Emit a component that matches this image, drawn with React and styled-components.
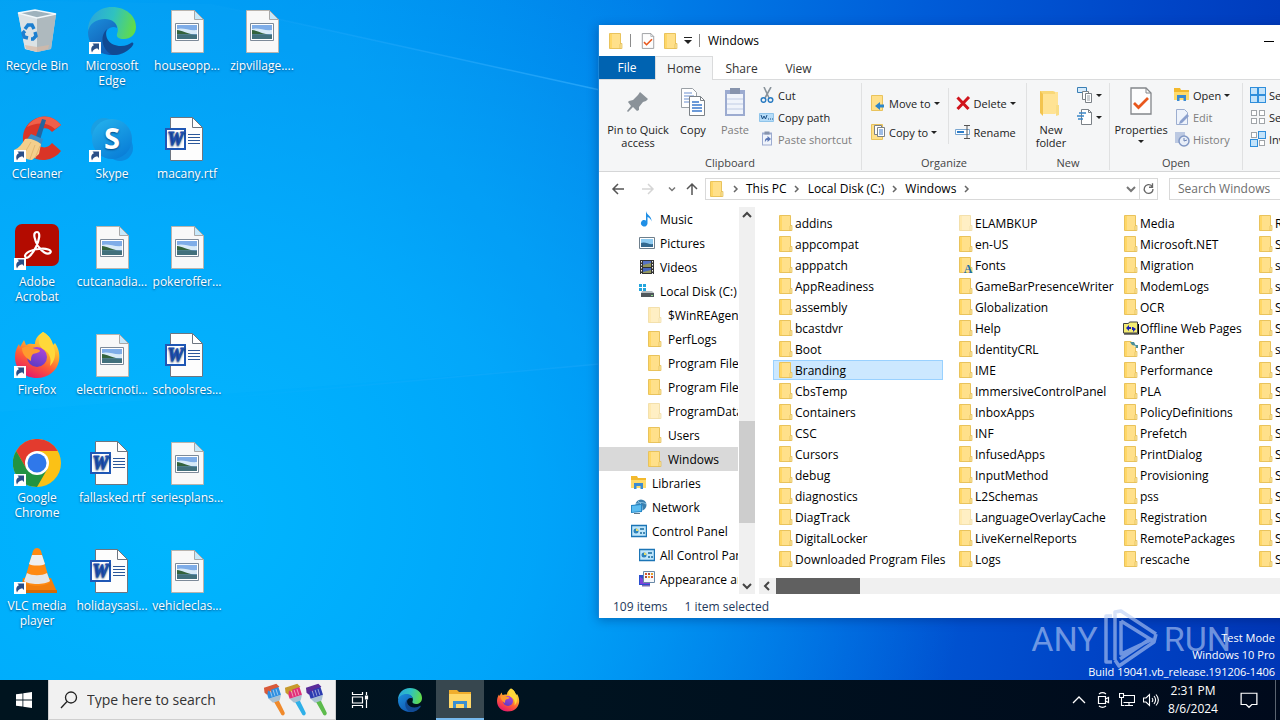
import React from "react";
import styled, { createGlobalStyle, css } from "styled-components";

const GlobalStyle = createGlobalStyle`
  *, *::before, *::after {
    box-sizing: border-box;
  }

  body {
    margin: 0;
    overflow: hidden;
    font-family: "Open Sans", "Noto Sans", sans-serif;
    font-size: 12px;
    line-height: 15px;
    color: #000;
  }

  button {
    border: 0;
    padding: 0;
    background: none;
    font: inherit;
    color: inherit;
    white-space: nowrap;
  }

  a {
    color: inherit;
    text-decoration: none;
  }

  svg {
    display: block;
    flex: none;
  }
`;

/* ---------- layout ---------- */

const Screen = styled.div`
  display: flex;
  flex-direction: column;
  height: 100vh;
  overflow: hidden;
`;

const Desktop = styled.main`
  position: relative;
  flex: 1;
  min-height: 0;
  overflow: hidden;
  background:
    radial-gradient(ellipse 62% 95% at 14% 76%, rgba(0, 184, 255, 0.95) 0%, rgba(0, 176, 255, 0.75) 45%, rgba(0, 160, 250, 0) 100%),
    linear-gradient(97deg, #009df0 0%, #0092f0 26%, #007ee8 48%, #005cd8 68%, #0044c6 86%, #0036b6 100%);
`;

const LightBeams = styled.svg`
  position: absolute;
  inset: 0;
  width: 100%;
  height: 100%;
`;

const IconGrid = styled.div`
  position: relative;
  display: grid;
  grid-auto-flow: column;
  grid-template-rows: repeat(6, 108px);
  grid-auto-columns: 75px;
  justify-content: start;
`;

const Shortcut = styled.button`
  display: flex;
  flex-direction: column;
  align-items: center;
  gap: 3px;
  padding: 7px 1px 0 0;
  color: #fff;
  text-shadow: 0 1px 2px rgba(0, 40, 90, 0.7);

  span {
    width: 70px;
    display: flex;
    justify-content: center;
    text-align: center;
    white-space: ${(props) => (props.$wrap ? "normal" : "nowrap")};
  }
`;

const SystemInfo = styled.div`
  position: absolute;
  right: 5px;
  bottom: 0;
  color: #fff;
  text-align: right;
  font-size: 11px;
  line-height: 17px;
`;

const Watermark = styled.div`
  position: absolute;
  right: 49px;
  bottom: 9px;
  display: flex;
  align-items: center;
  gap: 5px;
  color: rgba(185, 205, 245, 0.6);
  font-family: "Roboto", sans-serif;
  font-size: 34px;
  line-height: 64px;
`;

/* ---------- explorer window ---------- */

const Window = styled.section`
  position: absolute;
  top: 25px;
  bottom: 62px;
  left: 598px;
  right: -104px;
  display: flex;
  flex-direction: column;
  background: #fff;
  border-left: 1px solid #1a86d8;
  box-shadow: 0 2px 10px rgba(0, 20, 80, 0.35);
`;

const TitleBar = styled.header`
  display: flex;
  align-items: center;
  height: 31px;
  padding-left: 8px;
`;

const QuickButton = styled.button`
  display: flex;
  align-items: center;
  justify-content: center;
  width: ${(props) => props.$width || 23}px;
  height: 22px;
`;

const Bar = styled.span`
  width: 1px;
  height: 13px;
  margin: 0 5px;
  background: #8c8c8c;
`;

const WindowTitle = styled.h1`
  flex: 1;
  margin: 0;
  padding-left: 3px;
  font-size: 12px;
  font-weight: 400;
`;

const CaptionButton = styled.button`
  display: flex;
  align-items: center;
  justify-content: center;
  width: 46px;
  height: 30px;
`;

const Tabs = styled.nav`
  display: flex;
  height: 24px;
  border-bottom: 1px solid #dadbdc;
`;

const Tab = styled.button`
  height: 24px;
  width: 57px;
  color: #333;

  ${(props) =>
    props.$kind === "file" &&
    css`
      width: 56px;
      height: 23px;
      background: #0063b1;
      color: #fff;
    `}
  ${(props) =>
    props.$kind === "active" &&
    css`
      width: 58px;
      background: #f5f6f7;
      border: 1px solid #dadbdc;
      border-bottom: 0;
    `}
`;

const Ribbon = styled.div`
  display: flex;
  height: 92px;
  background: #f5f6f7;
  border-bottom: 1px solid #d5d6d7;
  padding: 3px 0 1px;
  font-size: 11px;
`;

const Group = styled.div`
  display: flex;
  flex: none;
  flex-direction: column;
  width: ${(props) => props.$width}px;
  border-right: 1px solid #e0e1e2;
`;

const GroupBody = styled.div`
  display: flex;
  flex: 1;
  padding-left: ${(props) => props.$pad || 4}px;
`;

const GroupLabel = styled.div`
  height: 15px;
  text-align: center;
  color: #444;
`;

const BigButton = styled.button`
  display: flex;
  flex-direction: column;
  align-items: center;
  gap: 4px;
  width: ${(props) => props.$width}px;
  padding-top: 4px;
  line-height: 13px;
  color: ${(props) => (props.$dim ? "#7d7d7d" : "#222")};
`;

const SmallColumn = styled.div`
  display: flex;
  flex-direction: column;
  gap: ${(props) => props.$gap || 0}px;
  padding: ${(props) => (props.$gap ? 9 : 1)}px 0 0 ${(props) => props.$pad || 4}px;
`;

const SmallButton = styled.button`
  display: flex;
  align-items: center;
  gap: 3px;
  height: 22px;
  color: ${(props) => (props.$dim ? "#7d7d7d" : "#222")};
`;

const Divider = styled.span`
  width: 1px;
  height: 56px;
  margin: 5px 0 0 8px;
  background: #e0e1e2;
`;

const AddressRow = styled.div`
  display: flex;
  align-items: center;
  height: 35px;
  padding: 0 12px 2px 6px;
`;

const NavButton = styled.button`
  display: flex;
  align-items: center;
  justify-content: center;
  width: ${(props) => props.$width}px;
  height: 22px;
`;

const AddressBox = styled.div`
  display: flex;
  align-items: center;
  flex: 1;
  height: 22px;
  padding-left: 3px;
  border: 1px solid #d9d9d9;
`;

const Crumb = styled.button`
  display: flex;
  align-items: center;
`;

const Chevron = styled.span`
  display: flex;
  justify-content: center;
  width: 21px;
`;

const Grow = styled.span`
  flex: 1;
`;

const RefreshButton = styled(NavButton)`
  border-left: 1px solid #d9d9d9;
`;

const SearchBox = styled.input`
  width: 203px;
  height: 22px;
  margin-left: 11px;
  padding: 0 8px;
  border: 1px solid #d9d9d9;
  font: inherit;

  &::placeholder {
    color: #6d6d6d;
    opacity: 1;
  }
`;

const Panes = styled.div`
  display: flex;
  flex: 1;
  min-height: 0;
`;

const Tree = styled.nav`
  width: 139px;
  overflow: hidden;
`;

const TreeItem = styled.a`
  display: flex;
  align-items: center;
  gap: 5px;
  height: 24px;
  padding-left: ${(props) => 32 + props.$level * 8}px;
  white-space: nowrap;
  background: ${(props) => (props.$selected ? "#d9d9d9" : "transparent")};
`;

const VerticalScroll = styled.div`
  display: flex;
  flex-direction: column;
  width: 16px;
  margin-left: 1px;
  background: #f0f0f0;
`;

const VerticalThumb = styled.span`
  height: 102px;
  margin: 198px 0 auto;
  background: #cdcdcd;
`;

const ArrowButton = styled.button`
  display: flex;
  align-items: center;
  justify-content: center;
  width: 16px;
  height: 16px;
`;

const Content = styled.div`
  display: flex;
  flex-direction: column;
  justify-content: space-between;
  flex: 1;
  min-width: 0;
  padding-left: 4px;
`;

const FileGrid = styled.div`
  display: grid;
  grid-auto-flow: column;
  grid-template-rows: repeat(17, 21px);
  grid-template-columns: 170px 155px 125px 170px;
  column-gap: 10px;
  padding: 6px 0 0 14px;
`;

const FileItem = styled.button`
  display: flex;
  align-items: center;
  gap: 1px;
  height: 20px;
  padding-left: 4px;
  border: 1px solid ${(props) => (props.$selected ? "#99d1ff" : "transparent")};
  background: ${(props) => (props.$selected ? "#cce8ff" : "none")};
`;

const HorizontalScroll = styled.div`
  display: flex;
  height: 16px;
  background: #f0f0f0;
`;

const HorizontalThumb = styled.span`
  width: 84px;
  margin-left: 1px;
  background: #606060;
`;

const StatusBar = styled.footer`
  display: flex;
  align-items: center;
  gap: 17px;
  height: 24px;
  padding-left: 14px;
  color: #1e395b;
`;

/* ---------- taskbar ---------- */

const Taskbar = styled.footer`
  display: flex;
  height: 40px;
  background: linear-gradient(90deg, #00141f 0%, #001320 45%, #000a1c 100%);
  color: #fff;
`;

const TaskButton = styled.button`
  display: flex;
  align-items: center;
  justify-content: center;
  width: ${(props) => props.$width || 48}px;
  background: ${(props) => (props.$active ? "#37474f" : "none")};
  border-bottom: ${(props) => (props.$active ? "2px solid #76b9ed" : "0")};
`;

const TaskSearch = styled.label`
  display: flex;
  align-items: center;
  width: 288px;
  padding: 0 6px 0 11px;
  background: #f1f1f1;
  border: 1px solid #cfcfcf;
  border-top: 0;

  input {
    flex: 1;
    min-width: 0;
    margin-left: 5px;
    border: 0;
    background: none;
    font: inherit;
    font-size: 14px;
  }

  input::placeholder {
    color: #333;
    opacity: 1;
  }
`;

const Tray = styled.div`
  display: flex;
  margin-left: auto;
`;

const Clock = styled.button`
  width: 60px;
  line-height: 18px;
  text-align: center;
  white-space: normal;
`;

const PeekButton = styled.button`
  width: 5px;
  border-left: 1px solid #5b6470;
`;

/* ---------- large icons ---------- */

function Arrow() {
  return (
    <g>
      <path d="M1 35h12v12H1z" fill="#fff" />
      <path d="M4 45.500c-1.800-4 0-7 2-7.300L4.500 36.500H11V43L9.200 41.200C7 41.500 5 43 4 45.500z" fill="#2b4f87" />
    </g>
  );
}

function Box48({ children, size = 48 }) {
  return (
    <svg width={size} height={size} viewBox="0 0 48 48">
      {children}
    </svg>
  );
}

function RecycleIcon() {
  return (
    <Box48>
      <path d="M5 6l17-3 21 4-5 35-14 3-12-3z" fill="#cbd5da" />
      <path d="M24 10l19-3-5 35-14 3z" fill="#aeb9be" />
      <path d="M5 6l19 4v35l-12-3z" fill="#dbe2e5" />
      <path d="M5 6l17-3 21 4-19 4z" fill="#9eb2bd" stroke="#f2f8fb" strokeWidth="1.500" />
      <path d="M12 38l12 2 12-2-1 4-11 3-11-3z" fill="#d9b9a4" opacity=".7" />
      <g fill="none" stroke="#1c7fd0" strokeWidth="3.400">
        <path d="M12 22l3-4h4l2 4" />
        <path d="M22 25l1 4-3 3h-2" />
        <path d="M15 31l-4-1-1-4 2-2" />
      </g>
    </Box48>
  );
}

function EdgeArt() {
  return (
    <g>
      <defs>
        <linearGradient id="edgeTop" x1="0" y1=".3" x2="1" y2=".5">
          <stop offset="0" stopColor="#2aa5dc" />
          <stop offset=".5" stopColor="#2fc2c0" />
          <stop offset="1" stopColor="#62dc48" />
        </linearGradient>
        <linearGradient id="edgeLeft" x1="0" y1="0" x2=".7" y2="1">
          <stop offset="0" stopColor="#1b8fdc" />
          <stop offset="1" stopColor="#1057b0" />
        </linearGradient>
      </defs>
      <path d="M0 24C0 10 10 0 24 0s24 9 24 20c0 8-6 12-12 12-5 0-8-2-7-5 3-7-2-13-9-13C10 14 2 18 0 24z" fill="url(#edgeTop)" />
      <path d="M0 25c1-8 8-13 17-13 7 0 12 4 12 9-5-3-12 1-12 9 0 9 8 16 16 17-3 1-6 1-9 1C10 48 0 38 0 25z" fill="url(#edgeLeft)" />
      <path d="M19 22c-3 8 2 17 14 17 5 0 8-2 10-3 2-1 3 0 2 2-4 6-11 10-20 10C14 44 11 29 19 22z" fill="#114a93" />
    </g>
  );
}

function EdgeIcon() {
  return (
    <Box48>
      <EdgeArt />
      <Arrow />
    </Box48>
  );
}

function CCleanerIcon() {
  return (
    <Box48>
      <path d="M48 10C43 3 34 0 27 2 15 5 9 15 10 26c1 12 11 20 22 19 7-1 12-4 16-9l-9-8c-3 4-8 6-12 3-5-3-5-12 0-16 4-3 9-2 12 2z" fill="#da3527" />
      <path d="M48 10C43 3 34 0 27 2c-6 2-10 5-13 10 10-5 20-5 28 2z" fill="#f0604a" />
      <path d="M29 4l4 1-6 20-5-1z" fill="#2466a0" />
      <path d="M18 19l12 5-2 7-16-4z" fill="#3a8cc8" />
      <path d="M12 24c5-1 11 1 16 5l-2 10-7 6c-6 0-12-5-18-10 5-2 8-6 11-11z" fill="#f4cf8c" />
      <path d="M18 27l-7 12M22 30l-5 14M27 31l-5 12" stroke="#e5b871" />
      <Arrow />
    </Box48>
  );
}

function SkypeIcon() {
  return (
    <Box48>
      <defs>
        <linearGradient id="skype" x1="0" y1="0" x2=".6" y2="1">
          <stop offset="0" stopColor="#25b4ee" />
          <stop offset="1" stopColor="#0a80d8" />
        </linearGradient>
      </defs>
      <circle cx="16" cy="16" r="13" fill="#1a9fe2" />
      <circle cx="32" cy="33" r="13" fill="#0b8be0" />
      <circle cx="24" cy="24" r="20" fill="url(#skype)" />
      <text x="24" y="34" textAnchor="middle" fontFamily="Open Sans, sans-serif" fontWeight="700" fontSize="29" fill="#fff">
        S
      </text>
      <Arrow />
    </Box48>
  );
}

function AcrobatIcon() {
  return (
    <Box48>
      <rect x="2" y="1" width="44" height="42" rx="7" fill="#b30b00" />
      <path
        d="M24 9c-5 0-2 9 1 14 4 6 9 9 12 7 3-3-4-5-11-4-7 0-14 4-14 7 1 5 7-1 11-9 3-6 5-15 1-15z"
        fill="none"
        stroke="#fff"
        strokeWidth="2.200"
      />
      <Arrow />
    </Box48>
  );
}

function FirefoxArt() {
  return (
    <g>
      <defs>
        <linearGradient id="foxBody" x1=".8" y1="0" x2=".3" y2="1">
          <stop offset="0" stopColor="#fff44f" />
          <stop offset=".35" stopColor="#ffb32c" />
          <stop offset=".65" stopColor="#ff5b36" />
          <stop offset="1" stopColor="#e3156e" />
        </linearGradient>
        <linearGradient id="foxGlobe" x1=".7" y1="0" x2=".3" y2="1">
          <stop offset="0" stopColor="#b045d8" />
          <stop offset="1" stopColor="#5b3bc4" />
        </linearGradient>
      </defs>
      <path d="M30 1c7 4 9 9 10 13l2-2c4 6 5 12 4 18-2 10-11 17-22 17C11 47 2 38 2 26c0-6 2-10 4-13l1 3 4-7 2 5c4-2 6-1 9-1 0-5 3-9 8-12z" fill="url(#foxBody)" />
      <circle cx="24" cy="26" r="10" fill="url(#foxGlobe)" />
      <path d="M9 17c6-3 10 0 14 1 2 0 4 1 4 2-1 2-5 2-7 3-2 2-2 4-2 7-5-3-9-7-9-13z" fill="#ff9a2e" />
      <path d="M30 1c7 4 9 9 10 13 4 8 2 16-3 21 2-8-1-14-7-17-6-4-5-12 0-17z" fill="#ffd83a" />
    </g>
  );
}

function FirefoxIcon() {
  return (
    <Box48>
      <FirefoxArt />
      <Arrow />
    </Box48>
  );
}

function ChromeIcon() {
  return (
    <Box48>
      <circle cx="24" cy="24" r="24" fill="#fbc116" />
      <path d="M3.200 12A24 24 0 0144.800 12H24L13.600 30z" fill="#e33b2e" />
      <path d="M3.200 12l10.400 18 10.400 6 10.400-6L24 48A24 24 0 013.200 12z" fill="#229342" />
      <circle cx="24" cy="24" r="12" fill="#fff" />
      <circle cx="24" cy="24" r="9.500" fill="#2f78ea" />
      <Arrow />
    </Box48>
  );
}

function VlcIcon() {
  return (
    <Box48>
      <path d="M10 31h28l6 14H8z" fill="#f27e0c" />
      <path d="M8 43h36v3H8z" fill="#d36a08" />
      <path d="M24 1c2 0 3 1 4 3l9 31c-4 5-22 5-26 0l9-31c1-2 2-3 4-3z" fill="#ff8a12" />
      <path d="M19 8h10l3 9c-3 2-13 2-16 0z" fill="#efefef" />
      <path d="M14 26c5 3 15 3 20 0l3 8c-5 4-21 4-26 0z" fill="#e6e6e6" />
      <Arrow />
    </Box48>
  );
}

function PhotoIcon() {
  return (
    <Box48>
      <path d="M8.500 3.500h23l9 9v33h-32z" fill="#f8f8f8" stroke="#b9b4ae" />
      <path d="M31.500 3.500v9h9z" fill="#c6e8fa" stroke="#a8a8a8" />
      <path d="M12.500 16.500h23v17h-23z" fill="#fff" stroke="#7d8a99" />
      <path d="M14 18h20v14H14z" fill="#7fade8" />
      <path d="M14 22c6-2 12 2 20 1v4H14z" fill="#d8eaf8" />
      <path d="M14 23c5 0 9 4 18 4.500H14z" fill="#33633c" />
      <path d="M14 27.500h20V32H14z" fill="#42707c" />
    </Box48>
  );
}

function WordIcon() {
  return (
    <Box48>
      <path d="M7.500 2.500h22l10 10v33h-32z" fill="#fdfdfd" stroke="#6d7580" />
      <path d="M29.500 2.500v10h10z" fill="#fff" stroke="#6d7580" />
      <path d="M25 19.500h12M25 22.500h12M25 25.500h12M25 28.500h12" stroke="#2b579a" />
      <rect x="3" y="14" width="19" height="20" fill="#fff" stroke="#1f57b5" strokeWidth="2" />
      <text x="12.500" y="30" textAnchor="middle" fontFamily="Liberation Serif, serif" fontStyle="italic" fontWeight="700" fontSize="18" fill="#1f4fae" stroke="#1f4fae">
        W
      </text>
    </Box48>
  );
}

/* ---------- small icons ---------- */

function Icon16({ children, size = 16 }) {
  return (
    <svg width={size} height={size} viewBox="0 0 16 16">
      {children}
    </svg>
  );
}

function FolderArt() {
  return (
    <g>
      <path d="M1.500.5h11v15h-11z" fill="#ffe08a" stroke="#e9c35c" />
      <path d="M2 1h2v14H2z" fill="#ffd766" />
      <path d="M12.500 10.500h1.500v5h-2v-4z" fill="#fbe6a0" stroke="#e3b94e" strokeWidth=".7" />
    </g>
  );
}

function Folder({ faded, mark }) {
  return (
    <Icon16>
      <g opacity={faded ? 0.5 : 1}>
        <FolderArt />
      </g>
      {mark === "font" && (
        <text x="10" y="16" textAnchor="middle" fontFamily="Liberation Serif, serif" fontWeight="700" fontSize="12" fill="#1f6fa8">
          A
        </text>
      )}
      {mark === "wrench" && (
        <g>
          <path d="M8 0h7v6h-3z" fill="#fff" />
          <path d="M7 1l4 0 2 4-4-1zM12 4h3v3h-2z" fill="#4c8f98" />
        </g>
      )}
    </Icon16>
  );
}

function NewFolderIcon() {
  return (
    <svg width="32" height="32" viewBox="0 0 32 32">
      <path d="M5 4h13l5 2v20H7l-2-2z" fill="#f8d777" />
      <path d="M5 4l3 3v22l-3-3z" fill="#f3c44f" />
      <path d="M8 7h12v-2h3v20l-3 2H8z" fill="#ffe394" />
      <path d="M21 18h3v10l-3 1z" fill="#f9dd86" />
    </svg>
  );
}

function SyncFolder() {
  return (
    <Icon16>
      <path d="M.5 3.500h5l1-1.500h8v11H.5z" fill="#f3ec72" stroke="#444" />
      <path d="M1 14h14.500V4" fill="none" stroke="#000" />
      <path d="M3 8l3-3v2h2v2H6v2M13 9l-3 3v-2H9V7h1" fill="#1b22b5" />
    </Icon16>
  );
}

function LibrariesIcon() {
  return (
    <Icon16>
      <path d="M0 1h6l1 2h8v10H0z" fill="#f3b92d" />
      <path d="M0 5h15v8H0z" fill="#ffdb6b" />
      <path d="M3 14V8h9v6H9.500v-3h-4v3z" fill="#3b8bd2" />
    </Icon16>
  );
}

function MusicIcon() {
  return (
    <Icon16>
      <path d="M7 0c.5 4 6 5 5.500 10.500-.5-2-1.500-3.500-4-4.500v6.500a3.300 3.300 0 11-1.500-3z" fill="#1f8fe6" />
    </Icon16>
  );
}

function PicturesIcon() {
  return (
    <Icon16>
      <path d="M.5 2.500h15v11H.5z" fill="#fff" stroke="#6e7f8c" />
      <path d="M2 4h12v8H2z" fill="#8ecbf1" />
      <path d="M2 8c4-2 8 2 12 1v3H2z" fill="#34698f" />
    </Icon16>
  );
}

function VideosIcon() {
  return (
    <Icon16>
      <path d="M1 1h14v14H1z" fill="#333" />
      <path d="M4 2h8v6H4z" fill="#5673c4" />
      <path d="M4 9h8v5H4z" fill="#4667bd" />
      <path d="M4 6l8-2v4H4zM4 13l8-2v3H4z" fill="#93975c" />
      <path d="M2.500 2v13M13.500 2v13" stroke="#eee" strokeDasharray="1.500 1.500" />
    </Icon16>
  );
}

function DiskIcon() {
  return (
    <Icon16>
      <path d="M0 1h3v3H0zM4 1h3v3H4zM0 5h3v3H0zM4 5h3v3H4z" fill="#22a5dd" />
      <path d="M3 8h10l2 2v4H2v-4z" fill="#b5bbbf" />
      <path d="M2 10h13v4H2z" fill="#50575c" />
      <path d="M12 12h2v1h-2z" fill="#8fe08a" />
    </Icon16>
  );
}

function NetworkIcon() {
  return (
    <Icon16>
      <circle cx="10" cy="6" r="5.500" fill="#3a7fae" />
      <path d="M7 2c3 2 5 6 4 9M5 5c4-2 7-2 10 0" stroke="#8cc6e8" fill="none" />
      <path d="M0 6l11-1v8L0 14z" fill="#2587c7" />
      <path d="M1 7l9-1v6L1 13z" fill="#5bbcf0" />
      <path d="M3 14h6v1H3z" fill="#60798b" />
    </Icon16>
  );
}

function ControlIcon() {
  return (
    <Icon16>
      <path d="M.5 2.500h15v11H.5z" fill="#bfe6fb" stroke="#1b75b6" strokeWidth="1.400" />
      <circle cx="5" cy="8" r="2.500" fill="#2e83bc" />
      <path d="M5 8V5.500A2.500 2.500 0 017.500 8z" fill="#e8df6a" />
      <path d="M9 5h4v2H9zM9 9h2v2H9zM12 9h2v2h-2z" fill="#4389b4" />
    </Icon16>
  );
}

function AppearanceIcon() {
  return (
    <Icon16>
      <path d="M0 4h11v10H0z" fill="#2a4fd0" />
      <path d="M1 6l10 6v1H1z" fill="#7e43d8" />
      <path d="M4.500.5h11v11h-11z" fill="#f5f7fa" stroke="#6a8aa8" />
      <path d="M6 2h2v2H6zM12 5h2v2h-2z" fill="#d8562c" />
      <path d="M9 2h2v2H9zM6 5h2v2H6z" fill="#b04a3a" />
      <path d="M12 2h2v2h-2zM9 5h2v2H9z" fill="#e8a02c" />
      <path d="M3 14h8v1.500H3z" fill="#7a6bb0" />
    </Icon16>
  );
}

function CheckPage({ size, viewBox }) {
  return (
    <svg width={size} height={size} viewBox={viewBox}>
      <path d="M1 1h15l5 5v21H1z" fill="#fdfdfd" stroke="#83868a" strokeWidth="1.300" />
      <path d="M16 1v5h5" fill="none" stroke="#83868a" />
      <path d="M4 16l4.500 4.500L18 11" fill="none" stroke="#e8571c" strokeWidth="2.800" />
    </svg>
  );
}

function Caret() {
  return (
    <svg width="6" height="3" viewBox="0 0 6 3">
      <path d="M0 0h6L3 3z" fill="#222" />
    </svg>
  );
}

function PinIcon() {
  return (
    <svg width="32" height="32" viewBox="0 0 32 32">
      <path d="M18 5l8 7-2 2-3 1-4 5v3l-2 1-4-4-5 5-1-1 4-5-3-4 1-1 4-1 5-5z" fill="#8a9299" />
    </svg>
  );
}

function CopyIcon() {
  return (
    <svg width="32" height="32" viewBox="0 0 32 32">
      <path d="M4.500 1.500h11l4 4v15h-15z" fill="#fff" stroke="#9aa0a6" />
      <path d="M7 6h8M7 9h10M7 12h10M7 15h10" stroke="#6b8fd0" />
      <path d="M12.500 9.500h11l4 4v15h-15z" fill="#fff" stroke="#7b8187" />
      <path d="M23.500 9.500v4h4" fill="none" stroke="#7b8187" />
      <path d="M15 15h7M15 18h10M15 21h10M15 24h10" stroke="#3c79cc" strokeWidth="1.400" />
    </svg>
  );
}

function PasteIcon({ size = 32, link }) {
  return (
    <svg width={size} height={size} viewBox="0 0 32 32">
      <path d="M6 3h20v26H6z" fill="#9cabd0" />
      <path d="M8 7h16v20H8z" fill="#f0f4fb" />
      <path d="M11 1h10v6H11z" fill="#8794ad" />
      {link ? (
        <path d="M12 23c-1-7 2-9 5-9v-4l7 6-7 6v-4c-2 0-4 1-5 5z" fill="#5a76b5" />
      ) : (
        <path d="M8 12h16M8 17h16M8 22h16" stroke="#c0cce4" />
      )}
    </svg>
  );
}

function CutIcon() {
  return (
    <Icon16>
      <path d="M5 0l5 11M12 0L6 11" stroke="#8a949c" strokeWidth="1.600" />
      <circle cx="4.500" cy="13" r="2.300" fill="none" stroke="#2b7cc2" strokeWidth="1.500" />
      <circle cx="11.500" cy="13" r="2.300" fill="none" stroke="#2b7cc2" strokeWidth="1.500" />
    </Icon16>
  );
}

function PathIcon() {
  return (
    <Icon16>
      <path d="M.5 4.500h14v8H.5z" fill="#b5dcf8" stroke="#8fc4ea" />
      <path d="M2 6l1.500 4L5 7l1.500 3L8 6M9 10h1M11 10h1M13 10h1" fill="none" stroke="#1b4f85" />
    </Icon16>
  );
}

function MoveIcon() {
  return (
    <Icon16>
      <path d="M1.500.5h11v15h-11z" fill="#ffe08a" stroke="#e9c35c" />
      <path d="M5 11l5-4v2.500h4v3h-4V15z" fill="#2e86c9" />
    </Icon16>
  );
}

function CopyToIcon() {
  return (
    <Icon16>
      <path d="M1.500.5h11v15h-11z" fill="#ffe08a" stroke="#e9c35c" />
      <path d="M4.500 1.500h7v9h-7z" fill="#fff" stroke="#7b8187" />
      <path d="M7.500 3.500h7v9h-7z" fill="#fff" stroke="#7b8187" />
      <path d="M9 6h4M9 8h4M9 10h4" stroke="#3c79cc" />
    </Icon16>
  );
}

function DeleteIcon() {
  return (
    <Icon16>
      <path d="M2.500 2.500l11 11.500M14 2L2.500 14" stroke="#d0141c" strokeWidth="3" />
    </Icon16>
  );
}

function RenameIcon() {
  return (
    <Icon16>
      <path d="M.5 5.500h14v5H.5z" fill="#fff" stroke="#7ba7d0" />
      <path d="M2 7h7v2H2z" fill="#2e7dc8" />
      <path d="M9 1.500h6M9 14.500h6M12 1.500v13" stroke="#555" />
    </Icon16>
  );
}

function NewItemIcon() {
  return (
    <Icon16>
      <path d="M.5.5h9v5h-9z" fill="#d6ebfb" stroke="#3a7fb5" />
      <path d="M5.500 4.500h6v8h-6z" fill="#fff" stroke="#7b8187" />
      <path d="M8.500 6.500h6v9h-6z" fill="#fff" stroke="#7b8187" />
      <path d="M10 9h3M10 11h3M10 13h3" stroke="#9aa0a6" />
    </Icon16>
  );
}

function EasyAccessIcon() {
  return (
    <Icon16>
      <path d="M4.500.5h7l3 3v12h-10z" fill="#fff" stroke="#7b8187" />
      <path d="M11.500.5v3h3" fill="none" stroke="#7b8187" />
      <path d="M2 4h7M0 7h7M1 10h5" stroke="#3a87c8" strokeWidth="1.400" />
    </Icon16>
  );
}

function EditIcon() {
  return (
    <Icon16>
      <path d="M2.500.5h8l3 3v12h-11z" fill="#eef3fb" stroke="#9daed0" />
      <path d="M13 5l2 2-7 7-3 1 1-3z" fill="#8ba0cd" />
    </Icon16>
  );
}

function HistoryIcon() {
  return (
    <Icon16>
      <path d="M1 1h10v11H1z" fill="#bcc9e2" />
      <circle cx="10" cy="10" r="5" fill="#e8eef8" stroke="#8097c4" strokeWidth="1.500" />
      <path d="M10 7v3l3-1" fill="none" stroke="#6b82b4" />
    </Icon16>
  );
}

function TilesIcon({ kind }) {
  const filled = { all: [0, 1, 2, 3], none: [], invert: [1, 2] }[kind];
  return (
    <Icon16>
      {[0, 1, 2, 3].map((i) => {
        const on = filled.includes(i);
        const inset = on ? 0 : 1;
        return (
          <rect
            key={i}
            x={(i % 2) * 8 + 0.5 + inset}
            y={Math.floor(i / 2) * 8 + 0.5 + inset}
            width={on ? 7 : 5}
            height={on ? 7 : 5}
            fill={on ? "#c3e3fa" : "#fff"}
            stroke={on ? "#2f8edb" : "#a0a4a8"}
          />
        );
      })}
    </Icon16>
  );
}

function Stroke({ d, color = "#444", width = 16, weight = 1.5 }) {
  return (
    <svg width={width} height={width} viewBox="0 0 16 16" fill="none" stroke={color} strokeWidth={weight}>
      <path d={d} />
    </svg>
  );
}

const RIGHT = "M6 5l3 3-3 3";
const DOWN = "M4 6l4 4 4-4";
const UP = "M4 10l4-4 4 4";

function Brushes() {
  const brushes = [
    ["#f08a2c", "#2f8fe0", "#d95a3a"],
    ["#2fb0e8", "#e02f78", "#c79a2c"],
    ["#5dbb4c", "#2b3bb0", "#5a2c9a"],
  ];
  return (
    <svg width="66" height="34" viewBox="0 0 66 34">
      {brushes.map(([handle, bristle, rim], i) => (
        <g key={handle} transform={`translate(${i * 21 + 1} 1) rotate(-18 10 12)`}>
          <path d="M8 17h5l2 14c0 3-4 3-4 0z" fill={handle} />
          <path d="M4 13h13l-3 5H7z" fill="#a9c0d2" />
          <path d="M4 4h13v9H4z" fill={bristle} />
          <path d="M3 1h13l2 4h-9v3l-3-3-2 4-2-3z" fill={rim} />
          <path d="M8 6v6M11 6v6M14 6v6" stroke="#ffffff" strokeOpacity=".5" />
        </g>
      ))}
    </svg>
  );
}

/* ---------- data ---------- */

const shortcuts = [
  ["Recycle Bin", RecycleIcon, true],
  ["CCleaner", CCleanerIcon],
  ["Adobe Acrobat", AcrobatIcon, true],
  ["Firefox", FirefoxIcon],
  ["Google Chrome", ChromeIcon, true],
  ["VLC media player", VlcIcon, true],
  ["Microsoft Edge", EdgeIcon, true],
  ["Skype", SkypeIcon],
  ["cutcanadia...", PhotoIcon],
  ["electricnoti...", PhotoIcon],
  ["fallasked.rtf", WordIcon],
  ["holidaysasi...", WordIcon],
  ["houseopp...", PhotoIcon],
  ["macany.rtf", WordIcon],
  ["pokeroffer...", PhotoIcon],
  ["schoolsres...", WordIcon],
  ["seriesplans...", PhotoIcon],
  ["vehicleclas...", PhotoIcon],
  ["zipvillage....", PhotoIcon],
];

const FadedFolder = () => <Folder faded />;

const tree = [
  ["Music", 1, MusicIcon],
  ["Pictures", 1, PicturesIcon],
  ["Videos", 1, VideosIcon],
  ["Local Disk (C:)", 1, DiskIcon],
  ["$WinREAgent", 2, FadedFolder],
  ["PerfLogs", 2, Folder],
  ["Program Files", 2, Folder],
  ["Program Files (x86)", 2, Folder],
  ["ProgramData", 2, FadedFolder],
  ["Users", 2, Folder],
  ["Windows", 2, Folder],
  ["Libraries", 0, LibrariesIcon],
  ["Network", 0, NetworkIcon],
  ["Control Panel", 0, ControlIcon],
  ["All Control Panel Items", 1, ControlIcon],
  ["Appearance and Personalization", 1, AppearanceIcon],
];

const files = [
  "addins", "appcompat", "apppatch", "AppReadiness", "assembly", "bcastdvr",
  "Boot", "Branding", "CbsTemp", "Containers", "CSC", "Cursors", "debug",
  "diagnostics", "DiagTrack", "DigitalLocker", "Downloaded Program Files",
  "ELAMBKUP", "en-US", "Fonts", "GameBarPresenceWriter", "Globalization",
  "Help", "IdentityCRL", "IME", "ImmersiveControlPanel", "InboxApps", "INF",
  "InfusedApps", "InputMethod", "L2Schemas", "LanguageOverlayCache",
  "LiveKernelReports", "Logs",
  "Media", "Microsoft.NET", "Migration", "ModemLogs", "OCR",
  "Offline Web Pages", "Panther", "Performance", "PLA", "PolicyDefinitions",
  "Prefetch", "PrintDialog", "Provisioning", "pss", "Registration",
  "RemotePackages", "rescache",
  "Resources", "SchCache", "schemas", "security", "ServiceProfiles",
  "ServiceState", "servicing", "Setup", "ShellComponents",
  "ShellExperiences", "SHELLNEW", "SKB", "SoftwareDistribution", "Speech",
  "Speech_OneCore", "System", "System32",
];

const fileIcons = {
  ELAMBKUP: <Folder faded />,
  LanguageOverlayCache: <Folder faded />,
  Fonts: <Folder mark="font" />,
  Panther: <Folder mark="wrench" />,
  "Offline Web Pages": <SyncFolder />,
};

/* ---------- sections ---------- */

function RibbonBar() {
  return (
    <Ribbon>
      <Group $width={263}>
        <GroupBody>
          <BigButton $width={70}>
            <PinIcon />
            <span>
              Pin to Quick
              <br />
              access
            </span>
          </BigButton>
          <BigButton $width={40}>
            <CopyIcon />
            Copy
          </BigButton>
          <BigButton $width={44} $dim>
            <PasteIcon />
            Paste
          </BigButton>
          <SmallColumn $pad={2}>
            <SmallButton>
              <CutIcon />
              Cut
            </SmallButton>
            <SmallButton>
              <PathIcon />
              Copy path
            </SmallButton>
            <SmallButton $dim>
              <PasteIcon size={16} link />
              Paste shortcut
            </SmallButton>
          </SmallColumn>
        </GroupBody>
        <GroupLabel>Clipboard</GroupLabel>
      </Group>
      <Group $width={165}>
        <GroupBody>
          <SmallColumn $gap={7}>
            <SmallButton>
              <MoveIcon />
              Move to
              <Caret />
            </SmallButton>
            <SmallButton>
              <CopyToIcon />
              Copy to
              <Caret />
            </SmallButton>
          </SmallColumn>
          <Divider />
          <SmallColumn $gap={7} $pad={6}>
            <SmallButton>
              <DeleteIcon />
              Delete
              <Caret />
            </SmallButton>
            <SmallButton>
              <RenameIcon />
              Rename
            </SmallButton>
          </SmallColumn>
        </GroupBody>
        <GroupLabel>Organize</GroupLabel>
      </Group>
      <Group $width={83}>
        <GroupBody $pad={2}>
          <BigButton $width={44}>
            <NewFolderIcon />
            <span>
              New
              <br />
              folder
            </span>
          </BigButton>
          <SmallColumn>
            <SmallButton aria-label="New item">
              <NewItemIcon />
              <Caret />
            </SmallButton>
            <SmallButton aria-label="Easy access">
              <EasyAccessIcon />
              <Caret />
            </SmallButton>
          </SmallColumn>
        </GroupBody>
        <GroupLabel>New</GroupLabel>
      </Group>
      <Group $width={133}>
        <GroupBody $pad={2}>
          <BigButton $width={58}>
            <CheckPage size={32} viewBox="-5 0 32 32" />
            Properties
            <Caret />
          </BigButton>
          <SmallColumn>
            <SmallButton>
              <LibrariesIcon />
              Open
              <Caret />
            </SmallButton>
            <SmallButton $dim>
              <EditIcon />
              Edit
            </SmallButton>
            <SmallButton $dim>
              <HistoryIcon />
              History
            </SmallButton>
          </SmallColumn>
        </GroupBody>
        <GroupLabel>Open</GroupLabel>
      </Group>
      <Group $width={115}>
        <GroupBody>
          <SmallColumn $pad={3}>
            <SmallButton>
              <TilesIcon kind="all" />
              Select all
            </SmallButton>
            <SmallButton>
              <TilesIcon kind="none" />
              Select none
            </SmallButton>
            <SmallButton>
              <TilesIcon kind="invert" />
              Invert selection
            </SmallButton>
          </SmallColumn>
        </GroupBody>
      </Group>
    </Ribbon>
  );
}

function AddressBar() {
  const chevron = (
    <Chevron>
      <Stroke d={RIGHT} color="#666" />
    </Chevron>
  );
  return (
    <AddressRow>
      <NavButton $width={26} aria-label="Back">
        <Stroke d="M14 8H3M8 3L3 8l5 5" color="#555" />
      </NavButton>
      <NavButton $width={34} aria-label="Forward">
        <Stroke d="M2 8h11M8 3l5 5-5 5" color="#d5d5d5" />
      </NavButton>
      <NavButton $width={14} aria-label="Recent locations">
        <Stroke d={DOWN} weight={2} color="#777" width={12} />
      </NavButton>
      <NavButton $width={26} aria-label="Up">
        <Stroke d="M8 14V3M3 8l5-5 5 5" color="#555" />
      </NavButton>
      <AddressBox>
        <Folder />
        {["This PC", "Local Disk (C:)", "Windows"].map((name) => (
          <Crumb key={name}>
            {name === "This PC" && chevron}
            {name}
            {chevron}
          </Crumb>
        ))}
        <Grow />
        <NavButton $width={16} aria-label="Previous locations">
          <Stroke d={DOWN} weight={2} color="#777" />
        </NavButton>
        <RefreshButton $width={18} aria-label="Refresh">
          <Stroke d="M11.500 5A5 5 0 108 13a5 5 0 004.500-5M12 1.500V6H8" color="#666" width={14} />
        </RefreshButton>
      </AddressBox>
      <SearchBox type="text" aria-label="Search Windows" placeholder="Search Windows" />
    </AddressRow>
  );
}

function Explorer() {
  return (
    <Window>
      <TitleBar>
        <QuickButton $width={18} aria-label="Window menu">
          <Folder />
        </QuickButton>
        <Bar />
        <QuickButton aria-label="Properties">
          <CheckPage size={16} viewBox="-3 0 28 28" />
        </QuickButton>
        <QuickButton aria-label="New folder">
          <Folder />
        </QuickButton>
        <QuickButton $width={12} aria-label="Customize toolbar">
          <svg width="8" height="7" viewBox="0 0 8 7">
            <path d="M0 0h8v1H0zM0 3h8L4 7z" fill="#222" />
          </svg>
        </QuickButton>
        <Bar />
        <WindowTitle>Windows</WindowTitle>
        <CaptionButton aria-label="Minimize">
          <Stroke d="M3 8.500h10" color="#000" weight={1} />
        </CaptionButton>
        <CaptionButton aria-label="Maximize">
          <Stroke d="M3.500 3.500h9v9h-9z" color="#000" weight={1} />
        </CaptionButton>
        <CaptionButton aria-label="Close">
          <Stroke d="M3 3l10 10M13 3L3 13" color="#000" weight={1} />
        </CaptionButton>
      </TitleBar>
      <Tabs>
        <Tab $kind="file">File</Tab>
        <Tab $kind="active">Home</Tab>
        <Tab>Share</Tab>
        <Tab>View</Tab>
      </Tabs>
      <RibbonBar />
      <AddressBar />
      <Panes>
        <Tree>
          {tree.map(([name, level, Icon]) => (
            <TreeItem key={name} href="#" $level={level} $selected={name === "Windows"}>
              <Icon />
              {name}
            </TreeItem>
          ))}
        </Tree>
        <VerticalScroll>
          <ArrowButton aria-label="Scroll up">
            <Stroke d={UP} weight={2} />
          </ArrowButton>
          <VerticalThumb />
          <ArrowButton aria-label="Scroll down">
            <Stroke d={DOWN} weight={2} />
          </ArrowButton>
        </VerticalScroll>
        <Content>
          <FileGrid>
            {files.map((name) => (
              <FileItem key={name} $selected={name === "Branding"}>
                {fileIcons[name] || <Folder />}
                {name}
              </FileItem>
            ))}
          </FileGrid>
          <HorizontalScroll>
            <ArrowButton aria-label="Scroll left">
              <Stroke d="M10 4L6 8l4 4" weight={2} />
            </ArrowButton>
            <HorizontalThumb />
          </HorizontalScroll>
        </Content>
      </Panes>
      <StatusBar>
        <span>109 items</span>
        <span>1 item selected</span>
      </StatusBar>
    </Window>
  );
}

function TaskbarRow() {
  return (
    <Taskbar>
      <TaskButton aria-label="Start">
        <svg width="16" height="16" viewBox="0 0 16 16" fill="#fff">
          <path d="M0 2.300L6.500 1.400v6.200H0zM7.300 1.300L16 0v7.600H7.300zM0 8.400h6.500v6.200L0 13.700zM7.300 8.400H16V16l-8.700-1.300z" />
        </svg>
      </TaskButton>
      <TaskSearch>
        <svg width="20" height="20" viewBox="0 0 20 20" fill="none" stroke="#222" strokeWidth="1.300">
          <circle cx="11" cy="7.500" r="5.500" />
          <path d="M7 11.500L1 18" />
        </svg>
        <input type="text" aria-label="Type here to search" placeholder="Type here to search" />
        <Brushes />
      </TaskSearch>
      <TaskButton aria-label="Task View">
        <svg width="18" height="18" viewBox="0 0 18 18" fill="none" stroke="#fff" strokeWidth="1.200">
          <path d="M1.500 1v2.500h10V1M1.500 17v-2.500h10V17M1.500 6h10v6h-10zM15.500 1v3M15.500 9v8" />
          <path d="M14.500 5h2v3h-2z" fill="#fff" />
        </svg>
      </TaskButton>
      <TaskButton $width={52} aria-label="Microsoft Edge">
        <Box48 size={24}>
          <EdgeArt />
        </Box48>
      </TaskButton>
      <TaskButton $active aria-label="File Explorer">
        <svg width="22" height="20" viewBox="0 0 22 20">
          <path d="M0 1h8l2 2h12v16H0z" fill="#f0ad2c" />
          <path d="M0 5h22v14H0z" fill="#ffd768" />
          <path d="M4 19v-7h14v7h-3v-4H7v4z" fill="#3a8fd0" />
        </svg>
      </TaskButton>
      <TaskButton aria-label="Firefox">
        <Box48 size={24}>
          <FirefoxArt />
        </Box48>
      </TaskButton>
      <Tray>
        <TaskButton $width={24} aria-label="Show hidden icons">
          <Stroke d="M2 11l6-6 6 6" color="#fff" weight={1.3} />
        </TaskButton>
        <TaskButton $width={24} aria-label="Meet now">
          <Stroke d="M3.500 4.500h7v7h-7zM10.500 7l3-1.500v5l-3-1.500M4 2c2-1.500 5-1.500 7 0M4 14c2 1.500 5 1.500 7 0" color="#fff" weight={1.2} />
        </TaskButton>
        <TaskButton $width={24} aria-label="Network">
          <Stroke d="M4.500 3.500h11v7h-11M.5 1.500h4v4h-4zM2.500 5.500v8h3M10 10.500v3M6 13.500h8" color="#fff" weight={1.1} />
        </TaskButton>
        <TaskButton $width={24} aria-label="Volume">
          <Stroke d="M.5 6h2.500l3.500-3.500v11L3 10H.500zM9 6c1 1.200 1 2.800 0 4M11 4c2 2.500 2 5.500 0 8M13 2.500c3 3.500 3 7.500 0 11" color="#fff" weight={1.1} />
        </TaskButton>
        <Clock>
          2:31 PM
          <br />
          8/6/2024
        </Clock>
        <TaskButton $width={52} aria-label="Notifications">
          <Stroke d="M1 2h14v10h-4.500L8 14.500 5.500 12H1z" color="#fff" width={18} weight={1.1} />
        </TaskButton>
        <PeekButton aria-label="Show desktop" />
      </Tray>
    </Taskbar>
  );
}

export default function App() {
  return (
    <Screen>
      <GlobalStyle />
      <Desktop>
        <LightBeams viewBox="0 0 1280 680" preserveAspectRatio="none">
          <defs>
            <linearGradient id="beam" gradientUnits="userSpaceOnUse" x1="200" y1="0" x2="600" y2="0">
              <stop offset="0" stopColor="#3db4ff" stopOpacity="0" />
              <stop offset="1" stopColor="#3db4ff" stopOpacity=".6" />
            </linearGradient>
          </defs>
          <path d="M210 4L600 90V364L0 412V0z" fill="#3fc0ff" opacity=".05" />
          <path d="M210 4L600 90" stroke="url(#beam)" strokeWidth="1.500" />
          <path d="M200 400L600 364" stroke="url(#beam)" strokeWidth="1.500" opacity=".4" />
        </LightBeams>
        <IconGrid>
          {shortcuts.map(([name, Icon, wrap]) => (
            <Shortcut key={name} $wrap={wrap}>
              <Icon />
              <span>{name}</span>
            </Shortcut>
          ))}
        </IconGrid>
        <Explorer />
        <Watermark>
          ANY
          <svg width="56" height="64" viewBox="0 0 56 64" fill="none" stroke="currentColor" strokeWidth="3.500" strokeLinejoin="round">
            <path d="M9 9H3v46h6M12 53V5l6-1 35 23M53 27l-2 8-35 24-4-6M18 14v33l32-15M18 14l29 18-30 20" />
          </svg>
          RUN
        </Watermark>
        <SystemInfo>
          Test Mode
          <br />
          Windows 10 Pro
          <br />
          Build 19041.vb_release.191206-1406
        </SystemInfo>
      </Desktop>
      <TaskbarRow />
    </Screen>
  );
}
